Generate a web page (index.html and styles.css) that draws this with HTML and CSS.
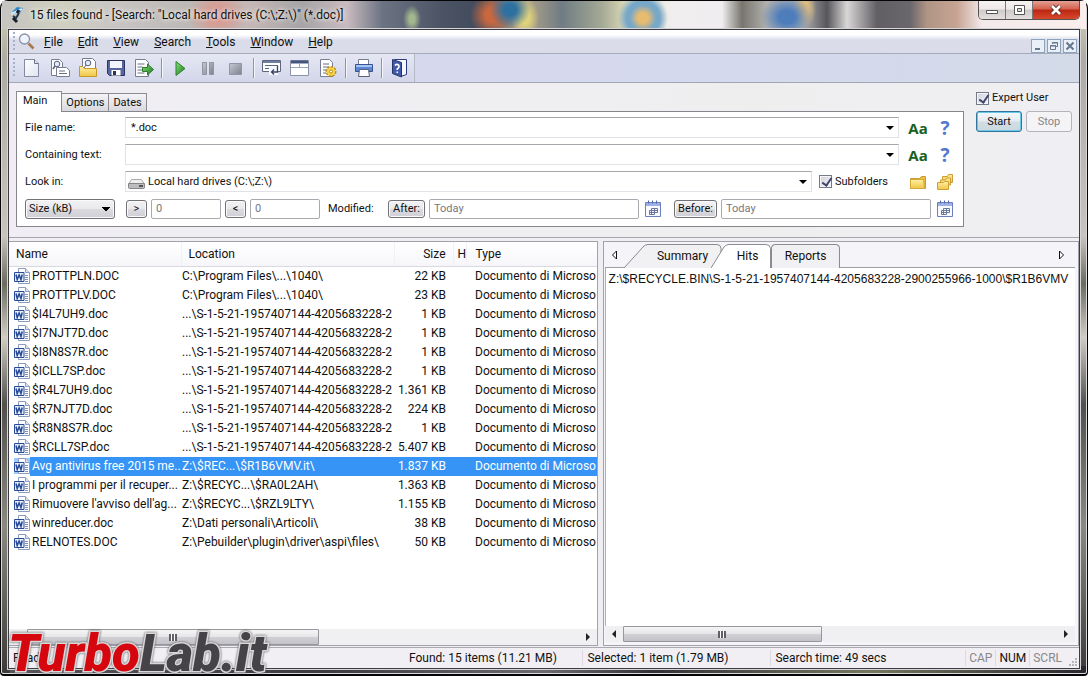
FILE: index.html
```html
<!DOCTYPE html>
<html lang="en">
<head>
<meta charset="utf-8">
<title>15 files found</title>
<link rel="stylesheet" href="styles.css">
</head>
<body>
<svg class="sprite" aria-hidden="true">
  <defs>
    <linearGradient id="g-page" x1="0" y1="0" x2="1" y2="1"><stop offset="0" stop-color="#fff"/><stop offset="1" stop-color="#dfe4ef"/></linearGradient>
    <linearGradient id="g-folder" x1="0" y1="0" x2="0" y2="1"><stop offset="0" stop-color="#fff0a0"/><stop offset="1" stop-color="#f0c548"/></linearGradient>
    <linearGradient id="g-green" x1="0" y1="0" x2="1" y2="1"><stop offset="0" stop-color="#8be07a"/><stop offset="1" stop-color="#15761d"/></linearGradient>
    <linearGradient id="g-gray" x1="0" y1="0" x2="1" y2="1"><stop offset="0" stop-color="#c6c8d2"/><stop offset="1" stop-color="#7d808d"/></linearGradient>
    <symbol id="i-word" viewBox="0 0 16 16">
      <path d="M4.500.500h7l4 4v11h-11z" fill="#fff" stroke="#8c9cc0"/>
      <path d="M11.500.500v4h4" fill="#dce4f4" stroke="#8c9cc0"/>
      <path d="M11 7.500h3M11 9.500h3M11 11.500h3M11 13.500h3" stroke="#8092bd"/>
      <path d="M.500 4.500h9.500v9h-9.500z" fill="#e9f0fc" stroke="#274a96"/>
      <path d="m2 6.500 1.200 5 1.900-4.500 1.900 4.500 1.200-5" fill="none" stroke="#274a96" stroke-width="1.500"/>
    </symbol>
    <symbol id="i-cal" viewBox="0 0 18 18">
      <path d="M1.500 2.500h15v14h-15z" fill="#f8faff" stroke="#6b80bb"/>
      <path d="M2 3h14v3H2z" fill="#9fb0e4"/>
      <path d="M4.500.500v3M8.500.500v3M12.500.500v3" stroke="#5368a8"/>
      <path d="M7.500 8.500h6M5.500 10.500h8M5.500 12.500h8M5.500 14.500h5M5.500 10.500v4M7.500 8.500v6M10.500 8.500v6M13.500 8.500v4" stroke="#68779c" fill="none"/>
    </symbol>
  </defs>
</svg>

<div class="window">
  <header class="titlebar">
    <svg class="app-icon" viewBox="0 0 16 18"><path d="M3 6 8 1l6 1-3 5z" fill="#2e86d2"/><path d="M2 8 13 3" stroke="#c8e6ff" stroke-width="2"/><path d="M10 7 7 12l-3-2" stroke="#23374a" stroke-width="2" fill="none"/><path d="m4 12 4 4M8 7l2-3" stroke="#17212e" stroke-width="3"/></svg>
    <h1 class="title">15 files found - [Search: "Local hard drives (C:\;Z:\)" (*.doc)]</h1>
    <div class="caption-buttons">
      <button class="cap" aria-label="Minimize"><svg viewBox="0 0 16 12"><path d="M2.500 6.500h11v3h-11z" fill="#fff" stroke="#555"/></svg></button>
      <button class="cap" aria-label="Maximize"><svg viewBox="0 0 16 12"><path d="M3.500 1.500h10v9h-10z" fill="#fff" stroke="#555"/><path d="M6.500 4.500h4v3h-4z" fill="#ddd" stroke="#555"/></svg></button>
      <button class="cap cap-close" aria-label="Close"><svg viewBox="0 0 16 12"><path d="m4 2 8 8M12 2l-8 8" stroke="#5b2a25" stroke-width="4.400"/><path d="m4 2 8 8M12 2l-8 8" stroke="#fff" stroke-width="2.600"/></svg></button>
    </div>
  </header>

  <div class="client">
    <nav class="menubar">
      <span class="grip"></span>
      <svg class="lens" viewBox="0 0 18 18"><path d="m10.500 10.500 5 5" stroke="#a97852" stroke-width="2.600"/><circle cx="6.500" cy="6" r="5" fill="#eef4ff" stroke="#8c93a5" stroke-width="1.300"/><path d="M4 5q1-2 3-2" stroke="#fff" fill="none"/></svg>
      <a class="menu" href="#"><u>F</u>ile</a>
      <a class="menu" href="#"><u>E</u>dit</a>
      <a class="menu" href="#"><u>V</u>iew</a>
      <a class="menu" href="#"><u>S</u>earch</a>
      <a class="menu" href="#"><u>T</u>ools</a>
      <a class="menu" href="#"><u>W</u>indow</a>
      <a class="menu" href="#"><u>H</u>elp</a>
      <div class="mdi">
        <button aria-label="Minimize document"><svg viewBox="0 0 10 10"><path d="M2 8h5" stroke="#66768f" stroke-width="2"/></svg></button>
        <button aria-label="Restore document"><svg viewBox="0 0 10 10"><path d="M3.500 3V1.500h5v4H7M3 2h6M1.500 4.500h5v4h-5zM1 5h6" fill="none" stroke="#66768f"/></svg></button>
        <button aria-label="Close document"><svg viewBox="0 0 10 10"><path d="m1.500 1.500 7 7M8.500 1.500l-7 7" stroke="#66768f" stroke-width="2"/></svg></button>
      </div>
    </nav>

    <div class="toolbar">
      <div class="tools">
        <span class="grip"></span>
        <button class="tool" aria-label="New"><svg viewBox="0 0 20 20"><path d="M2.500 1.500h10l4 4v13h-14z" fill="url(#g-page)" stroke="#8389a0"/><path d="M12.500 1.500v4h4" fill="#e4e8f3" stroke="#6a7088"/></svg></button>
        <button class="tool" aria-label="Copy"><svg viewBox="0 0 20 20"><path d="M1.500 1.500h8l3 3v13h-11z" fill="#fff" stroke="#777e94"/><circle cx="7" cy="6" r="2.800" fill="#dfeaff" stroke="#596078"/><path d="m5 8-2 3" stroke="#596078" stroke-width="1.500"/><path d="M6.500 9.500h10l3 3v6h-13z" fill="#fff" stroke="#777e94"/><path d="M9 13h6M9 15.500h8" stroke="#69718a"/></svg></button>
        <button class="tool" aria-label="Open"><svg viewBox="0 0 20 20"><path d="M4.500.500h10l3 3v9h-13z" fill="#fff" stroke="#777e94"/><circle cx="10" cy="5" r="2.800" fill="#dfeaff" stroke="#596078"/><path d="m8 7-2 3" stroke="#596078"/><path d="M1.500 8.500h3l2 2h12v8h-17z" fill="url(#g-folder)" stroke="#c9982a"/></svg></button>
        <button class="tool" aria-label="Save"><svg viewBox="0 0 20 20"><path d="M1.500 2.500h17v15h-15l-2-2z" fill="#59669e" stroke="#2b345e"/><path d="M4 3h12v7H4z" fill="#f2f5ff"/><path d="M5.500 12h9v5.500h-9z" fill="#fff"/><path d="M7 13h3v4H7z" fill="#2b345e"/></svg></button>
        <button class="tool" aria-label="Export"><svg viewBox="0 0 20 20"><path d="M1.500 1.500h10l3 3v14h-13z" fill="#fff" stroke="#777e94"/><path d="M3.500 6h7M3.500 9h5M3.500 12h5M3.500 15h7" stroke="#69718a"/><path d="M8.500 9.500h5v-3.500l6 5.500-6 5.500v-3.500h-5z" fill="url(#g-green)" stroke="#2f7c31"/></svg></button>
        <span class="sep"></span>
        <button class="tool" aria-label="Start search"><svg viewBox="0 0 20 20"><path d="m6 3.500 9 7-9 7z" fill="url(#g-green)" stroke="#29802c"/></svg></button>
        <button class="tool" aria-label="Pause"><svg viewBox="0 0 20 20"><path d="M4.500 4.500h4v12h-4zM11.500 4.500h4v12h-4z" fill="url(#g-gray)" stroke="#9295a3"/></svg></button>
        <button class="tool" aria-label="Stop search"><svg viewBox="0 0 20 20"><path d="M3.500 5.500h12v11h-12z" fill="url(#g-gray)" stroke="#9295a3"/></svg></button>
        <span class="sep"></span>
        <button class="tool" aria-label="Search pane"><svg viewBox="0 0 20 20"><path d="M.500 2.500h18v11h-18z" fill="#fff" stroke="#5d667e"/><path d="M1 4h17" stroke="#6e7f9e" stroke-width="2"/><path d="M3 7.500h13M3 10.500h6" stroke="#5d667e"/><path d="M7 9h9v8H7z" fill="#f6f8ff"/><path d="M15.500 8v6h-6m2.500-2.500-2.500 2.500 2.500 2.500" fill="none" stroke="#39435d" stroke-width="1.300"/></svg></button>
        <button class="tool" aria-label="Layout"><svg viewBox="0 0 20 20"><path d="M.500 2.500h18v15h-18z" fill="#fff" stroke="#8b93a8"/><path d="M1 4h17" stroke="#42557e" stroke-width="3"/><path d="M1 9.500h17M9.500 6v4" stroke="#9aa5bb"/></svg></button>
        <button class="tool" aria-label="Options"><svg viewBox="0 0 20 20"><path d="M2.500 1.500h9l3 3v14h-12z" fill="#fff" stroke="#777e94"/><path d="M5 6h6M5 9h6M5 12h4M5 15h3" stroke="#69718a"/><circle cx="13" cy="13.500" r="4.500" fill="#f6cb36" stroke="#b98c16" stroke-dasharray="2.200 1.200" stroke-width="2"/><circle cx="13" cy="13.500" r="4" fill="#f8d548"/><circle cx="13" cy="13.500" r="1.500" fill="#fff" stroke="#b98c16"/></svg></button>
        <span class="sep"></span>
        <button class="tool" aria-label="Print"><svg viewBox="0 0 20 20"><path d="M4.500 1.500h10v5h-10z" fill="#fff" stroke="#777e94"/><path d="M1.500 6.500h17v7h-17z" fill="#5a86d6" stroke="#39528d"/><path d="M2 8h16" stroke="#a5c5f5" stroke-width="2"/><path d="M5.500 11.500h9l1 7h-11z" fill="#fff" stroke="#59617a"/></svg></button>
        <span class="sep"></span>
        <button class="tool" aria-label="Help"><svg viewBox="0 0 20 20"><path d="M4.500 1.500h12v15l-6 2z" fill="#f5f8ff" stroke="#2c3c7b"/><path d="m2.500 1.500 9 3v14.500l-9-3.500z" fill="#435aa9" stroke="#25336d"/><path d="M5 7.500q1.500-2 3.500-.500 1.500 2-1.200 3.800v1.200M7.300 13.500v1.500" fill="none" stroke="#fff" stroke-width="1.600"/></svg></button>
      </div>
    </div>

    <form class="search">
      <div class="criteria">
        <div class="tabs">
          <button type="button" class="tab active">Main</button>
          <button type="button" class="tab">Options</button>
          <button type="button" class="tab">Dates</button>
        </div>
        <div class="panel">
          <div class="row">
            <label class="label" for="fname">File name:</label>
            <div class="combo"><input id="fname" value="*.doc"><button type="button" class="drop" aria-label="Show names"></button></div>
            <button type="button" class="pick aa">Aa</button>
            <button type="button" class="pick help">?</button>
          </div>
          <div class="row">
            <label class="label" for="ftext">Containing text:</label>
            <div class="combo"><input id="ftext"><button type="button" class="drop" aria-label="Show texts"></button></div>
            <button type="button" class="pick aa">Aa</button>
            <button type="button" class="pick help">?</button>
          </div>
          <div class="row">
            <label class="label" for="flook">Look in:</label>
            <div class="combo">
              <svg class="drive" viewBox="0 0 17 10"><path d="m3.500.500h10l2.500 4h-15z" fill="#eee" stroke="#aaa"/><path d="M.500 4.500h16v4q0 1-1 1h-14q-1 0-1-1z" fill="#bdbdc0" stroke="#858589"/><path d="M11 7h4" stroke="#555" stroke-width="2"/></svg>
              <input id="flook" value="Local hard drives (C:\;Z:\)"><button type="button" class="drop" aria-label="Show locations"></button>
            </div>
            <label class="check sub"><input type="checkbox" checked>Subfolders</label>
            <button type="button" class="pick" aria-label="Browse"><svg viewBox="0 0 20 20"><path d="M2.500 6.500h9l2-2h4v12h-15z" fill="#e9bd3d" stroke="#c89c32"/><path d="M2.500 7.500h13l1 9h-14z" fill="url(#g-folder)" stroke="#d5a93a"/></svg></button>
            <button type="button" class="pick" aria-label="Browse several"><svg viewBox="0 0 20 20"><path d="M7.500 4.500h5l1-2h4v8h-10z" fill="url(#g-folder)" stroke="#cf9f35"/><path d="M5.500 8h5l1-2h4v7h-10z" fill="url(#g-folder)" stroke="#cf9f35"/><path d="M2.500 10.500h6l1-1h4v8h-11z" fill="url(#g-folder)" stroke="#cf9f35"/></svg></button>
          </div>
          <div class="row">
            <select class="unit" aria-label="Size unit"><option>Size (kB)</option></select>
            <button type="button" class="op">&gt;</button>
            <input class="box size" aria-label="Larger than" placeholder="0">
            <button type="button" class="op">&lt;</button>
            <input class="box size" aria-label="Smaller than" placeholder="0">
            <span class="modified">Modified:</span>
            <button type="button" class="op after">After:</button>
            <input class="box date" aria-label="After" placeholder="Today">
            <button type="button" class="pick cal" aria-label="Pick start"><svg viewBox="0 0 18 18"><use href="#i-cal"/></svg></button>
            <button type="button" class="op before">Before:</button>
            <input class="box date" aria-label="Before" placeholder="Today">
            <button type="button" class="pick" aria-label="Pick end"><svg viewBox="0 0 18 18"><use href="#i-cal"/></svg></button>
          </div>
        </div>
      </div>
      <div class="actions">
        <label class="check"><input type="checkbox" checked>Expert User</label>
        <div class="run">
          <button type="button" class="btn primary">Start</button>
          <button type="button" class="btn" disabled>Stop</button>
        </div>
      </div>
    </form>

    <main class="split">
      <section class="files">
        <div class="table-wrap">
          <table>
            <colgroup><col class="c-name"><col class="c-loc"><col class="c-size"><col class="c-h"><col class="c-type"></colgroup>
            <thead><tr><th>Name</th><th>Location</th><th class="num">Size</th><th class="hits">H</th><th>Type</th></tr></thead>
            <tbody>
              <tr><td><span class="file"><svg><use href="#i-word"/></svg><span>PROTTPLN.DOC</span></span></td><td>C:\Program Files\...\1040\</td><td class="num">22 KB</td><td></td><td>Documento di Microso</td></tr>
              <tr><td><span class="file"><svg><use href="#i-word"/></svg><span>PROTTPLV.DOC</span></span></td><td>C:\Program Files\...\1040\</td><td class="num">23 KB</td><td></td><td>Documento di Microso</td></tr>
              <tr><td><span class="file"><svg><use href="#i-word"/></svg><span>$I4L7UH9.doc</span></span></td><td>...\S-1-5-21-1957407144-4205683228-2</td><td class="num">1 KB</td><td></td><td>Documento di Microso</td></tr>
              <tr><td><span class="file"><svg><use href="#i-word"/></svg><span>$I7NJT7D.doc</span></span></td><td>...\S-1-5-21-1957407144-4205683228-2</td><td class="num">1 KB</td><td></td><td>Documento di Microso</td></tr>
              <tr><td><span class="file"><svg><use href="#i-word"/></svg><span>$I8N8S7R.doc</span></span></td><td>...\S-1-5-21-1957407144-4205683228-2</td><td class="num">1 KB</td><td></td><td>Documento di Microso</td></tr>
              <tr><td><span class="file"><svg><use href="#i-word"/></svg><span>$ICLL7SP.doc</span></span></td><td>...\S-1-5-21-1957407144-4205683228-2</td><td class="num">1 KB</td><td></td><td>Documento di Microso</td></tr>
              <tr><td><span class="file"><svg><use href="#i-word"/></svg><span>$R4L7UH9.doc</span></span></td><td>...\S-1-5-21-1957407144-4205683228-2</td><td class="num">1.361 KB</td><td></td><td>Documento di Microso</td></tr>
              <tr><td><span class="file"><svg><use href="#i-word"/></svg><span>$R7NJT7D.doc</span></span></td><td>...\S-1-5-21-1957407144-4205683228-2</td><td class="num">224 KB</td><td></td><td>Documento di Microso</td></tr>
              <tr><td><span class="file"><svg><use href="#i-word"/></svg><span>$R8N8S7R.doc</span></span></td><td>...\S-1-5-21-1957407144-4205683228-2</td><td class="num">1 KB</td><td></td><td>Documento di Microso</td></tr>
              <tr><td><span class="file"><svg><use href="#i-word"/></svg><span>$RCLL7SP.doc</span></span></td><td>...\S-1-5-21-1957407144-4205683228-2</td><td class="num">5.407 KB</td><td></td><td>Documento di Microso</td></tr>
              <tr class="selected"><td><span class="file"><svg><use href="#i-word"/></svg><span>Avg antivirus free 2015 me...</span></span></td><td>Z:\$REC...\$R1B6VMV.it\</td><td class="num">1.837 KB</td><td></td><td>Documento di Microso</td></tr>
              <tr><td><span class="file"><svg><use href="#i-word"/></svg><span>I programmi per il recuper...</span></span></td><td>Z:\$RECYC...\$RA0L2AH\</td><td class="num">1.363 KB</td><td></td><td>Documento di Microso</td></tr>
              <tr><td><span class="file"><svg><use href="#i-word"/></svg><span>Rimuovere l'avviso dell'ag...</span></span></td><td>Z:\$RECYC...\$RZL9LTY\</td><td class="num">1.155 KB</td><td></td><td>Documento di Microso</td></tr>
              <tr><td><span class="file"><svg><use href="#i-word"/></svg><span>winreducer.doc</span></span></td><td>Z:\Dati personali\Articoli\</td><td class="num">38 KB</td><td></td><td>Documento di Microso</td></tr>
              <tr><td><span class="file"><svg><use href="#i-word"/></svg><span>RELNOTES.DOC</span></span></td><td>Z:\Pebuilder\plugin\driver\aspi\files\</td><td class="num">50 KB</td><td></td><td>Documento di Microso</td></tr>
            </tbody>
          </table>
        </div>
        <div class="scroll">
          <button class="arrow left" aria-label="Scroll left"></button>
          <div class="track"><div class="thumb wide"><i></i></div></div>
          <button class="arrow right" aria-label="Scroll right"></button>
        </div>
      </section>

      <section class="details">
        <div class="views">
          <button class="nav" aria-label="Previous tab"><svg viewBox="0 0 8 10"><path d="M6.500 1v8l-4-4z" fill="#fff" stroke="#111"/></svg></button>
          <button class="view summary"><svg viewBox="0 0 98 24" preserveAspectRatio="none"><path d="M0 24 19 3q2-2.500 5-2.500h69q4 0 4 4V24" fill="#f1f0f3" stroke="#8b8b90"/></svg><span>Summary</span></button>
          <button class="view hits-tab"><svg viewBox="0 0 60 24" preserveAspectRatio="none"><path d="M0 24 13 3q2-2.500 5-2.500h37q4 0 4.500 4V24" fill="#fff" stroke="#8b8b90"/></svg><span>Hits</span></button>
          <button class="view reports"><svg viewBox="0 0 69 24" preserveAspectRatio="none"><path d="M.500 24V4.500q0-4 4-4h59q4 0 4 4V24" fill="#f1f0f3" stroke="#8b8b90"/></svg><span>Reports</span></button>
          <button class="nav next" aria-label="Next tab"><svg viewBox="0 0 8 10"><path d="M1.500 1v8l4-4z" fill="#fff" stroke="#111"/></svg></button>
        </div>
        <textarea class="result" wrap="off" readonly aria-label="Hits">Z:\$RECYCLE.BIN\S-1-5-21-1957407144-4205683228-2900255966-1000\$R1B6VMV</textarea>
        <div class="scroll">
          <button class="arrow left" aria-label="Scroll left"></button>
          <div class="track"><div class="thumb"><i></i></div></div>
          <button class="arrow right" aria-label="Scroll right"></button>
        </div>
      </section>
    </main>

    <footer class="status">
      <span class="ready">Ready</span>
      <span class="found">Found: 15 items (11.21 MB)</span>
      <span class="picked">Selected: 1 item (1.79 MB)</span>
      <span class="time">Search time: 49 secs</span>
      <span class="key off">CAP</span>
      <span class="key">NUM</span>
      <span class="key off">SCRL</span>
      <svg class="size-grip" viewBox="0 0 12 12"><path d="M8 3h2M8 6h2M8 9h2M5 6h2M5 9h2M2 9h2" stroke="#b5b5ba" stroke-width="2"/></svg>
    </footer>
  </div>
  <div class="watermark"><span class="red">Turbo</span><span class="dark">Lab.it</span></div>
</div>
</body>
</html>
```
FILE: styles.css
```css
* { box-sizing: border-box; }
body { margin: 0; font: 12px/16px Roboto, "Noto Sans", sans-serif; color: #111; }
button, input, select, textarea { font: inherit; color: inherit; margin: 0; padding: 0; }
button { border: 0; background: none; }
svg { display: block; }
.sprite { position: absolute; width: 0; height: 0; }

.window {
  position: relative; display: flex; flex-direction: column; min-height: 100vh; padding: 0 8px 6px;
  border: 1px solid #050508; border-width: 1px 1px 2px; border-radius: 8px 8px 4px 4px;
  background:
    linear-gradient(#c9c6c4, #c8c8ae 20px, transparent 60px),
    linear-gradient(90deg, transparent 8px, #55555a 9px, #3c3a3e 30%, #6d6a70 50%, #333036 60%, #77775f 80%, #29252c) bottom / 100% 8px no-repeat,
    linear-gradient(#a5a29c, #c9c3bd 35%, #6b6b60 42%, #d1cdc3 50%, #51504d 60%, #8b8a80 78%, #3b3a38);
  box-shadow: inset 0 0 0 1px #d9d9dc;
}
.titlebar {
  display: flex; align-items: center; height: 28px; margin: 0 -7px; padding-left: 7px;
  background:
    radial-gradient(circle at 641px 17px, #e8bc70 0 5px, #78a8c8 13px 17px, transparent 25px),
    radial-gradient(ellipse 20px 18px at 508px 9px, #2d71a0 0 30%, transparent),
    radial-gradient(ellipse 22px 22px at 490px 14px, #c96740 0 30%, transparent),
    radial-gradient(ellipse 14px 20px at 523px 17px, #ded27c 0 30%, transparent),
    radial-gradient(ellipse 26px 22px at 785px 16px, #4e7dbc 0 30%, transparent),
    radial-gradient(ellipse 12px 20px at 802px 8px, #e9c17c 0 30%, transparent),
    radial-gradient(ellipse 9px 14px at 410px 18px, #a3b78e 0 30%, transparent),
    radial-gradient(ellipse 30px 24px at 215px 14px, #d89a90 0 30%, transparent),
    linear-gradient(90deg, #c5c4c0, #cfd0c0 60px, #c8c5c3 110px, #bcb8b6 190px, #c5b7b5 250px, #a6a4a6 300px, #c9bbbf 345px, #6c7484 380px, #4b5364 440px, #414b5c 480px, #b9a88b 520px, #6f7c83 560px, #a5aa95 600px, #dedbb8 625px, #f0eeee 670px, #efedef 720px, #77756d 740px, #b3b1ae 765px, #b2b3b2 800px, #57565b 825px, #d9d7d6 845px, #625f64 875px, #69666c 908px, #b09584 925px, #c7a493 955px, #f2e9ea 980px, #fbeeec);
}
.app-icon { width: 16px; height: 18px; margin-right: 5px; }
.title { flex: 1; margin: 0; font: inherit; text-shadow: 0 0 4px #fff, 0 0 6px #fffa; white-space: nowrap; }
.caption-buttons { display: flex; align-self: flex-start; margin-right: 6px; border: 1px solid #555; border-top: 0; border-radius: 0 0 5px 5px; overflow: hidden; }
.cap { width: 27px; height: 18px; display: grid; place-items: center; border-right: 1px solid #777; background: linear-gradient(#f7f3f2, #eee8e8 45%, #cfcaca 50%, #e5e0df); }
.cap svg { width: 16px; height: 12px; }
.cap-close { width: 46px; border: 0; background: linear-gradient(#e3a094, #d4604c 45%, #bb2711 50%, #d8482d); }

.client { flex: 1; display: flex; flex-direction: column; min-width: 0; margin: 0 -1px -1px; border: 1px solid #3c3c42; background: #efeef3; box-shadow: 0 0 0 1px #d5d5d9; }
.menubar { display: flex; align-items: center; gap: 15px; height: 24px; padding: 0 2px 0 4px; background: linear-gradient(#fff 0 5px, #dadcea 10px); border-bottom: 1px solid #a7abb9; }
.grip { align-self: center; width: 2px; height: 20px; background: repeating-linear-gradient(#a7b1d0 0 2px, transparent 2px 4px); }
.lens { width: 18px; height: 18px; margin: 0 -7px 0 -12px; }
.menu { color: inherit; text-decoration: none; }
.mdi { display: flex; gap: 2px; margin-left: auto; align-self: flex-end; }
.mdi button { width: 14px; height: 14px; border: 1px solid #8da2bc; background: #e9f0f8; display: grid; place-items: center; }
.mdi svg { width: 10px; height: 10px; }
.toolbar { display: flex; height: 29px; background: linear-gradient(90deg, #d6d8ec, #d5d9ee 60%, #d3dae8); border-bottom: 1px solid #a3a7b3; }
.tools { display: flex; align-items: center; padding: 0 0 0 4px; border-right: 1px solid #b5b9c6; background: linear-gradient(#e5e7f4, #d3d6ea); }
.tools .grip { margin-right: 3px; }
.tool { width: 28px; height: 26px; display: grid; place-items: center; }
.tool svg { width: 20px; height: 20px; }
.sep { width: 2px; height: 20px; margin: 0 3px; border-left: 1px solid #8f93a8; border-right: 1px solid #f5f5fc; }

.search { display: flex; gap: 12px; padding: 8px 7px 10px; font-size: 11px; line-height: 14px; border-bottom: 1px solid #a5a5ab; background: linear-gradient(90deg, #f0eef4, #efeeef 70%, #efeef2); }
.criteria { flex: 1; min-width: 0; }
.tabs { display: flex; align-items: flex-end; }
.tab { height: 18px; padding: 0 4px; border: 1px solid #8c8b92; border-left-width: 0; border-bottom: 0; background: linear-gradient(#f4f3f6, #d9d8de); }
.tab.active { height: 21px; margin-bottom: -1px; padding: 0 14px 2px 6px; border-left-width: 1px; background: #fff; z-index: 1; }
.panel { display: flex; flex-direction: column; gap: 6px; padding: 5px 8px 7px; background: #fff; border: 1px solid #85858b; }
.row { display: flex; align-items: center; height: 21px; }
.label { width: 100px; flex: none; }
.combo { flex: 1; display: flex; align-items: center; height: 21px; min-width: 0; border: 1px solid #e1e1e8; border-top-color: #a5a5ac; background: #fff; }
.combo input { flex: 1; min-width: 0; height: 18px; padding-left: 5px; border: 0; outline: 0; background: none; }
.drive { width: 17px; height: 10px; margin: 4px 0 0 2px; }
.combo .drive + input { padding-left: 3px; }
.drop { width: 16px; height: 18px; display: grid; place-items: center; }
.drop::before { content: ""; border: 4px solid transparent; border-top-color: #000; border-bottom: 0; }
.pick { flex: none; width: 20px; height: 20px; margin-left: 7px; display: grid; place-items: center; }
.pick svg { width: 20px; height: 20px; }
.combo + .pick { margin-left: 9px; }
.aa { color: #17601f; font: bold 15px/20px "Open Sans", sans-serif; }
.help { color: #5479cd; font: bold 19px/20px "Open Sans", sans-serif; }
.check { display: flex; align-items: center; gap: 3px; white-space: nowrap; }
.check input { appearance: none; width: 13px; height: 13px; border: 1px solid #747b88; background: linear-gradient(135deg, #cfd0dc, #f5f5fa); box-shadow: inset 0 0 0 1px #f6f6f9; }
.check input:checked::before { content: ""; display: block; width: 4px; height: 8px; margin: 0 0 0 4px; border: solid #40466b; border-width: 0 2px 2px 0; transform: rotate(35deg); }
.sub { width: 74px; margin: 0 8px 0 7px; }
.unit, .op { border: 1px solid #707075; border-radius: 3px; background: linear-gradient(#f2f2f4, #e9e9ec 48%, #dadadf 52%, #cfcfd5); box-shadow: inset 0 0 0 1px #fafafc; }
.unit { appearance: none; width: 90px; height: 20px; padding: 0 3px; background: conic-gradient(from 315deg at 4px 4px, #000 90deg, transparent 0) right 4px center / 8px 4px no-repeat, linear-gradient(#f2f2f4, #e9e9ec 48%, #dadadf 52%, #cfcfd5); }
.op { flex: none; width: 21px; height: 18px; line-height: 14px; }
.unit + .op { margin-left: 11px; }
.box { min-width: 0; height: 20px; margin-left: 4px; padding: 0 4px; border: 1px solid #a9a9b0; border-radius: 2px; background: #fff; }
.box::placeholder { color: #77777d; opacity: 1; }
.size { flex: none; width: 70px; }
.size + .op { margin-left: 4px; }
.date { flex: 1; }
.date + .pick { margin-left: 4px; }
.date + .pick svg { width: 18px; height: 18px; }
.modified { width: 60px; margin-left: 8px; flex: none; }
.after { width: 37px; }
.before { width: 43px; margin-left: 11px; }
.actions { display: flex; flex-direction: column; gap: 6px; width: 96px; flex: none; }
.actions .check { height: 14px; }
.run { display: flex; gap: 4px; }
.btn { flex: 1; height: 21px; border: 1px solid #b4b4ba; border-radius: 3px; background: #f4f3f6; }
.btn:disabled { color: #86868c; }
.primary { border-color: #32749a; background: linear-gradient(#f4f8fa, #e5ecf0 48%, #d3dce2 52%, #cbd8e0); box-shadow: inset 0 0 0 1px #68c8ec; }

.split { flex: 1; display: flex; gap: 5px; margin-top: 3px; min-height: 0; }
.files { flex: 592; display: flex; flex-direction: column; min-width: 0; background: #fff; border: 1px solid #a2a2a8; border-left: 0; }
.table-wrap { flex: 1; overflow: hidden; }
table { width: 100%; table-layout: fixed; border-collapse: collapse; white-space: nowrap; }
.c-name { width: 172px; }
.c-loc { width: 213px; }
.c-size { width: 59px; }
.c-h { width: 13px; }
th { height: 24px; padding: 0 7px; font-weight: normal; text-align: left; overflow: hidden; background: linear-gradient(#fff, #f6f6fa); border-bottom: 1px solid #d9d9e0; }
th + th { border-left: 1px solid #f0f0f5; }
td { height: 19px; padding: 0 1px; overflow: hidden; }
td:last-child, th:last-child { padding-left: 9px; padding-right: 0; }
th.num, td.num { text-align: right; padding-right: 7px; }
th.hits { padding: 0 0 0 4px; }
td:first-child { padding: 0; }
.file { display: flex; align-items: center; height: 19px; padding-left: 5px; }
.file svg { width: 16px; height: 16px; flex: none; }
.file span { flex: 1; padding-left: 2px; height: 19px; line-height: 19px; }
.selected td { color: #fff; background: #3594f5; }
.selected td:first-child { background: linear-gradient(90deg, #fff 21px, #3594f5 21px); }
.selected svg { background: #3594f580; }
.scroll { display: flex; height: 16px; background: #f0eff1; }
.arrow { width: 18px; display: grid; place-items: center; }
.arrow::before { content: ""; border: 4px solid transparent; }
.left::before { border-right-color: #222; border-left: 0; }
.right::before { border-left-color: #222; border-right: 0; }
.track { flex: 1; display: flex; }
.thumb { width: 46%; display: grid; place-items: center; border: 1px solid #96969c; border-radius: 1px; background: linear-gradient(#f5f5f6, #e6e6e8 48%, #d0d0d4 52%, #c2c2c8); }
.wide { width: 53%; }
.thumb i { width: 8px; height: 7px; background: repeating-linear-gradient(90deg, #606066 0 2px, #fff 2px 3px); }
.details { flex: 474; display: flex; flex-direction: column; min-width: 0; padding: 0 3px 0 1px; border: 1px solid #a2a2a8; background: #f5f4f8; }
.views { display: flex; align-items: flex-end; height: 26px; padding: 0 3px; border-bottom: 1px solid #9d9da4; }
.nav { width: 12px; height: 24px; display: grid; place-items: center; }
.nav svg { width: 8px; height: 10px; }
.next { margin-left: auto; margin-right: 4px; }
.view { display: grid; height: 24px; margin-bottom: -1px; }
.view > * { grid-area: 1 / 1; place-self: center; }
.view > svg { width: 100%; height: 24px; }
.summary { width: 98px; margin-left: 4px; }
.summary span { padding-left: 20px; }
.hits-tab { width: 60px; margin-left: -11px; z-index: 1; }
.hits-tab span { padding-left: 14px; }
.reports { width: 70px; }
.result { flex: 1; width: 100%; margin: 0; padding: 3px 0 3px 3px; border: 0; border-left: 1px solid #b0b0b6; resize: none; outline: 0; overflow: hidden; background: #fff; font: 12px/16px "Liberation Sans", sans-serif; }
.details .scroll { margin-bottom: 3px; }

.status { display: flex; align-items: center; height: 21px; margin-top: 1px; border-top: 1px solid #a9a9af; background: #f1eff3; white-space: nowrap; }
.status > span { padding: 0 4px; }
.status span + span { border-left: 1px solid #dcdae0; }
.ready { width: 396px; }
.status .found { flex: 178; border: 0; }
.picked { flex: 188; }
.time { flex: 195; }
.status .key { padding: 0 3px; }
.off { color: #88888d; }
.size-grip { width: 12px; height: 12px; align-self: flex-end; margin-left: 2px; }

.watermark { position: absolute; left: 7px; bottom: -5px; font: italic 900 51px/50px Roboto, "Liberation Sans", sans-serif; -webkit-text-stroke: 3px #d9d6d8; paint-order: stroke fill; filter: drop-shadow(0 0 1px #555); white-space: nowrap; }
.red { color: #d5060e; }
.dark { color: #454347; }
```
